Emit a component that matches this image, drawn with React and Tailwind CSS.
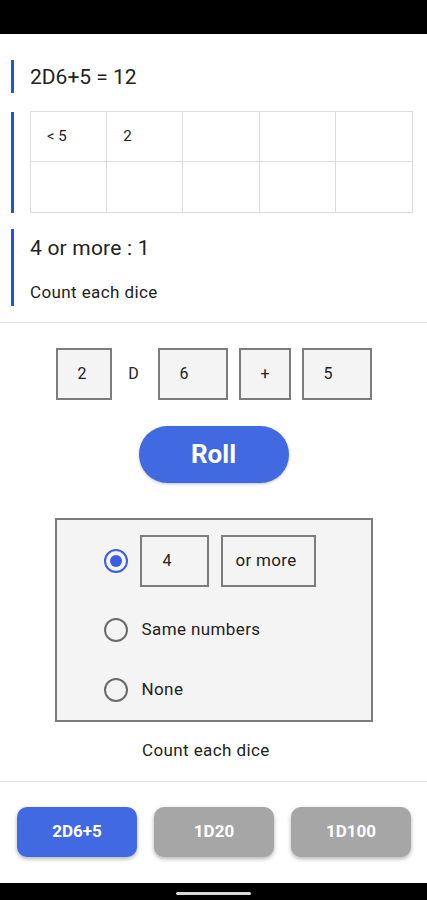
import React from "react";

function Radio({ checked }) {
  return checked ? (
    <div className="w-[24px] h-[24px] rounded-full border-[2.5px] border-[#3b5fe2] flex items-center justify-center shrink-0">
      <div className="w-[12px] h-[12px] rounded-full bg-[#3b5fe2]" />
    </div>
  ) : (
    <div className="w-[24px] h-[24px] rounded-full border-2 border-[#6b6b6b] shrink-0" />
  );
}

function Box({ w, children, extra = "" }) {
  return (
    <div
      className={`h-[52px] border-2 border-[#7c7c7c] bg-[#f4f4f4] flex items-center text-[16px] tracking-[0.3px] text-[#222] ${extra}`}
      style={{ width: w }}
    >
      {children}
    </div>
  );
}

export default function App() {
  const font = { fontFamily: "Roboto, 'Noto Sans', sans-serif" };
  return (
    <div className="w-[427px] h-[900px] bg-white flex flex-col overflow-hidden text-[#222]" style={font}>
      <div className="h-[34px] bg-black shrink-0" />

      {/* Section 1 */}
      <div className="mt-[26px] h-[33px] flex">
        <div className="ml-[11px] w-[3px] bg-[#1f55e0]" />
        <div className="ml-[16px] flex items-center text-[21px] pt-[2px]">2D6+5 = 12</div>
      </div>

      {/* Section 2 */}
      <div className="mt-[18px] h-[102px] flex">
        <div className="ml-[11px] w-[3px] bg-[#1f55e0] mt-[1px]" />
        <div className="ml-[16px] w-[383px] border border-[#dcdcdc] grid grid-cols-5 grid-rows-2">
          {["< 5", "2", "", "", "", "", "", "", "", ""].map((t, i) => (
            <div
              key={i}
              className={`flex items-center pl-[16px] text-[15px] border-[#dcdcdc] ${i % 5 !== 4 ? "border-r" : ""} ${i < 5 ? "border-b" : ""}`}
            >
              {t}
            </div>
          ))}
        </div>
      </div>

      {/* Section 3 */}
      <div className="mt-[16px] h-[77px] flex">
        <div className="ml-[11px] w-[3px] bg-[#1f55e0]" />
        <div className="ml-[16px] flex flex-col">
          <div className="mt-[5px] text-[21px] leading-[28px] tracking-[0.2px]">4 or more : 1</div>
          <div className="mt-[18px] text-[17px] leading-[24px] tracking-[0.4px]">Count each dice</div>
        </div>
      </div>

      <div className="mt-[16px] h-px bg-[#e2e2e2] shrink-0" />

      {/* Inputs row */}
      <div className="mt-[25px] flex justify-center">
        <Box w={56} extra="pl-[20px]">2</Box>
        <div className="w-[46px] flex items-center justify-center text-[16px] pr-[2px]">D</div>
        <Box w={70} extra="pl-[20px]">6</Box>
        <Box w={52} extra="ml-[11px] pl-[20px]">+</Box>
        <Box w={70} extra="ml-[11px] pl-[20px]">5</Box>
      </div>

      {/* Roll */}
      <div className="mt-[26px] flex justify-center">
        <button className="w-[150px] h-[57px] rounded-full bg-[#4169e1] text-white text-[26px] font-bold shadow-[0_1px_3px_rgba(0,0,0,0.25)]">
          Roll
        </button>
      </div>

      {/* Options box */}
      <div className="mt-[35px] flex justify-center">
        <div className="w-[318px] h-[204px] border-2 border-[#7c7c7c] bg-[#f4f4f4] flex flex-col pl-[47px]">
          <div className="mt-[15px] h-[52px] flex items-center">
            <Radio checked />
            <Box w={69} extra="ml-[12px] pl-[21px]">4</Box>
            <Box w={95} extra="ml-[12px] pl-[13px] !text-[17px]">or more</Box>
          </div>
          <div className="mt-[19px] h-[48px] flex items-center">
            <Radio />
            <span className="ml-[14px] text-[17px] tracking-[0.4px]">Same numbers</span>
          </div>
          <div className="mt-[12px] h-[48px] flex items-center">
            <Radio />
            <span className="ml-[14px] text-[17px] tracking-[0.4px]">None</span>
          </div>
        </div>
      </div>

      <div className="mt-[16px] h-[24px] leading-[24px] text-[17px] tracking-[0.4px] pl-[142px]">Count each dice</div>

      <div className="mt-[19px] h-px bg-[#e2e2e2] shrink-0" />

      {/* Bottom buttons */}
      <div className="mt-[25px] flex gap-[17px] pl-[17px] pr-[16px]">
        <button className="flex-1 h-[50px] rounded-[10px] bg-[#4169e1] text-white text-[17px] font-bold shadow-[0_2px_4px_rgba(0,0,0,0.3)]">
          2D6+5
        </button>
        <button className="flex-1 h-[50px] rounded-[10px] bg-[#a6a6a6] text-white text-[17px] font-bold shadow-[0_2px_4px_rgba(0,0,0,0.3)]">
          1D20
        </button>
        <button className="flex-1 h-[50px] rounded-[10px] bg-[#a6a6a6] text-white text-[17px] font-bold shadow-[0_2px_4px_rgba(0,0,0,0.3)]">
          1D100
        </button>
      </div>

      <div className="mt-[26px] h-[17px] bg-black shrink-0 flex justify-center pt-[9px]">
        <div className="w-[75px] h-[3px] rounded-full bg-[#d8d8d8]" />
      </div>
    </div>
  );
}
